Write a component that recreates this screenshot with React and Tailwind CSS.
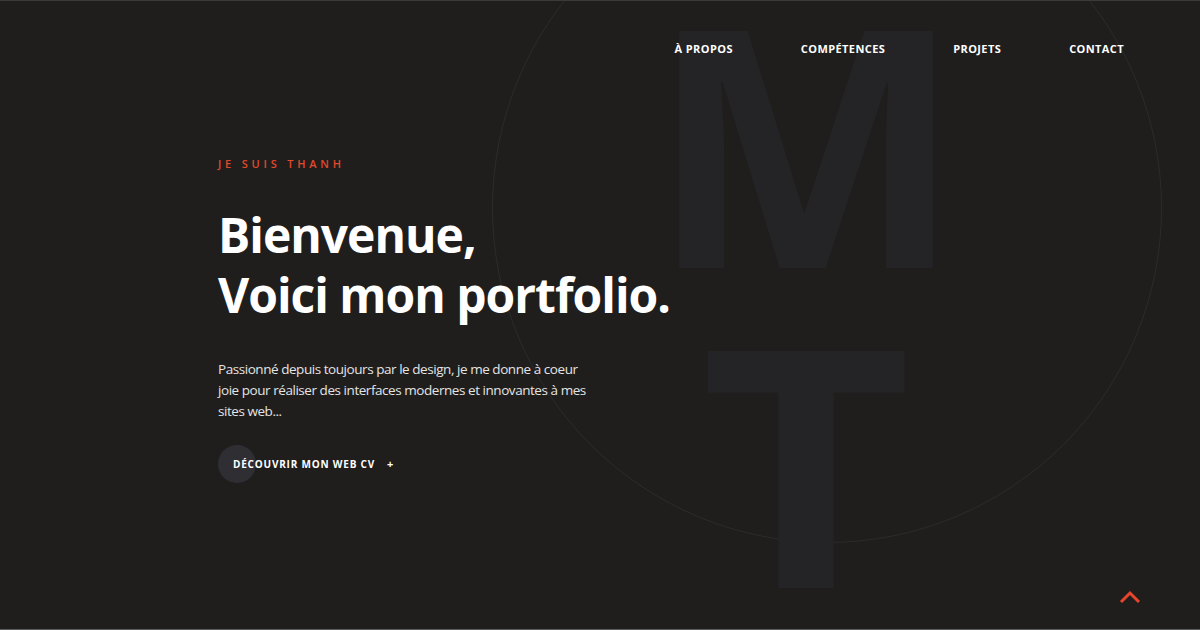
import React from 'react';

const navItems = ['À propos', 'Compétences', 'Projets', 'Contact'];

const App = () => {
  return (
    <div
      className="relative w-full h-[630px] overflow-hidden bg-[#1f1e1d] border-t border-t-[#3a3a3a] border-b border-b-[#5c5c5c]"
      style={{ fontFamily: '"Open Sans", "Noto Sans", sans-serif' }}
    >
      {/* Decorative circle + initials */}
      <div className="absolute left-[492px] top-[-128px] w-[670px] h-[670px] rounded-full border border-[#2b2b2e]" />
      <div className="absolute left-[646px] top-[-22px] w-[320px] flex flex-col items-center text-[#242427] font-bold leading-[320px] text-[332px] select-none">
        <span>M</span>
        <span className="scale-x-110">T</span>
      </div>

      {/* Nav */}
      <nav className="relative flex justify-end gap-[68px] pr-[76px] pt-[40px]">
        {navItems.map((item) => (
          <a key={item} href="#" className="text-[11px] font-bold uppercase tracking-[0.4px] text-white">
            {item}
          </a>
        ))}
      </nav>

      {/* Hero */}
      <section className="relative pl-[218px] pt-[98px]">
        <p className="text-[11px] font-semibold uppercase tracking-[3.8px] text-[#e0492c]">Je suis Thanh</p>
        <h1 className="mt-[33px] text-[48px] font-bold leading-[60px] tracking-[-1px] text-white">
          Bienvenue,
          <br />
          Voici mon portfolio.
        </h1>
        <p className="mt-[34px] w-[375px] text-[13.5px] leading-[21px] tracking-[-0.45px] text-[#e4e4e4]">
          Passionné depuis toujours par le design, je me donne à coeur joie pour réaliser des interfaces modernes et innovantes à mes sites web...
        </p>
        <button className="relative mt-[23px] flex items-center h-[38px]">
          <span className="absolute left-0 top-0 w-[38px] h-[38px] rounded-full bg-[#2f2e33]" />
          <span className="relative pl-[15px] text-[10px] font-bold uppercase tracking-[0.8px] text-white">
            Découvrir mon web CV
          </span>
          <span className="relative ml-[12px] text-[11px] font-bold text-white">+</span>
        </button>
      </section>

      {/* Back to top */}
      <a href="#" className="absolute left-[1119px] top-[589px]">
        <svg width="22" height="14" viewBox="0 0 22 14" fill="none">
          <polyline points="2,12 11,3 20,12" stroke="#e8452c" strokeWidth="3" />
        </svg>
      </a>
    </div>
  );
};

export default App;
